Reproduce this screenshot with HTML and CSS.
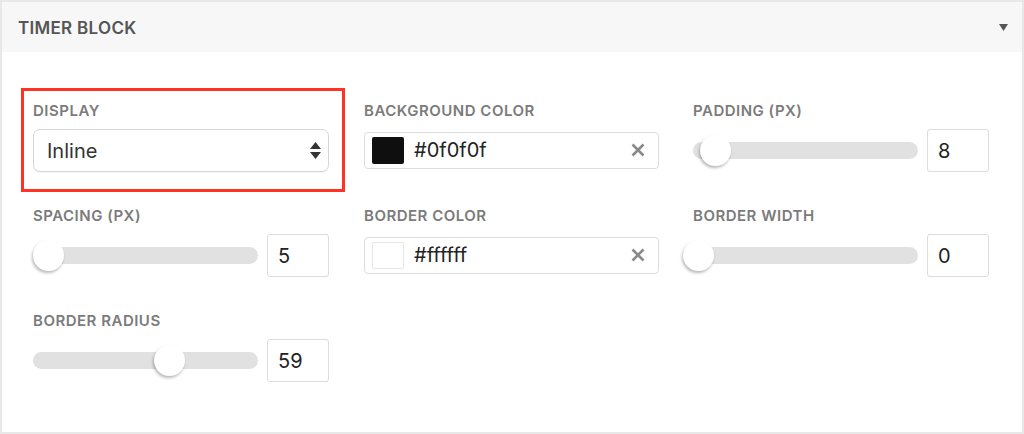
FILE: index.html
```html
<!DOCTYPE html>
<html>
<head>
<meta charset="utf-8">
<link rel="stylesheet" href="styles.css">
</head>
<body>
<div class="panel">
  <div class="panel-head">
    <span class="panel-title">TIMER BLOCK</span>
    <svg class="caret" width="9" height="7" viewBox="0 0 9 7"><path d="M0 0H9L4.5 7Z" fill="#555"/></svg>
  </div>
  <div class="panel-body">
    <div class="field highlight">
      <div class="label">DISPLAY</div>
      <div class="control">
        <div class="select">
          <span class="select-text">Inline</span>
          <svg class="updown" width="11" height="17" viewBox="0 0 11 17"><path d="M5.5 0L11 7H0Z M0 10H11L5.5 17Z" fill="#333"/></svg>
        </div>
      </div>
    </div>
    <div class="field">
      <div class="label">BACKGROUND COLOR</div>
      <div class="control">
        <div class="color-input">
          <span class="swatch swatch-dark"></span>
          <span class="color-text">#0f0f0f</span>
          <svg class="clear" width="14" height="14" viewBox="0 0 14 14"><path d="M1.5 1.5L12.5 12.5M12.5 1.5L1.5 12.5" stroke="#8a8a8a" stroke-width="2.6" stroke-linecap="butt"/></svg>
        </div>
      </div>
    </div>
    <div class="field">
      <div class="label">PADDING (PX)</div>
      <div class="control">
        <div class="slider"><span class="thumb" style="left: 7px"></span></div>
        <div class="num">8</div>
      </div>
    </div>

    <div class="field">
      <div class="label">SPACING (PX)</div>
      <div class="control">
        <div class="slider"><span class="thumb" style="left: 0px"></span></div>
        <div class="num">5</div>
      </div>
    </div>
    <div class="field">
      <div class="label">BORDER COLOR</div>
      <div class="control">
        <div class="color-input">
          <span class="swatch swatch-light"></span>
          <span class="color-text">#ffffff</span>
          <svg class="clear" width="14" height="14" viewBox="0 0 14 14"><path d="M1.5 1.5L12.5 12.5M12.5 1.5L1.5 12.5" stroke="#8a8a8a" stroke-width="2.6" stroke-linecap="butt"/></svg>
        </div>
      </div>
    </div>
    <div class="field">
      <div class="label">BORDER WIDTH</div>
      <div class="control">
        <div class="slider"><span class="thumb" style="left: -10px"></span></div>
        <div class="num">0</div>
      </div>
    </div>

    <div class="field">
      <div class="label">BORDER RADIUS</div>
      <div class="control">
        <div class="slider"><span class="thumb" style="left: 121px"></span></div>
        <div class="num">59</div>
      </div>
    </div>
  </div>
</div>
</body>
</html>
```

FILE: styles.css
```css
* { box-sizing: border-box; }
html, body { margin: 0; padding: 0; background: #fff; }
body {
  font-family: Inter, "Liberation Sans", sans-serif;
  width: 1024px;
  height: 434px;
  overflow: hidden;
}
.panel {
  width: 1024px;
  height: 434px;
  border: 2px solid #e8e8e8;
  background: #fff;
}
.panel-head {
  height: 50px;
  background: #f7f7f7;
  display: flex;
  align-items: center;
  justify-content: space-between;
  padding: 2px 14px 0 16px;
}
.panel-title {
  font-size: 17px;
  font-weight: 600;
  color: #555;
  letter-spacing: 0.3px;
}
.caret { margin-top: -2px; }
.panel-body {
  display: grid;
  grid-template-columns: 296px 294px 296px;
  column-gap: 35px;
  row-gap: 35px;
  padding: 50px 31px 0 31px;
}
.field { position: relative; }
.highlight::after {
  content: "";
  position: absolute;
  left: -12px;
  right: -16px;
  top: -14px;
  bottom: -20px;
  border: 3px solid #ff3224;
}
.label {
  font-size: 15px;
  line-height: 17px;
  font-weight: 600;
  color: #7b7b7b;
  letter-spacing: 0.5px;
  margin-bottom: 10px;
  white-space: nowrap;
}
.control {
  height: 43px;
  display: flex;
  align-items: center;
}
.select {
  width: 100%;
  height: 43px;
  border: 1px solid #d6d6d6;
  border-radius: 7px;
  display: flex;
  align-items: center;
  justify-content: space-between;
  padding: 0 7px 0 13px;
  box-shadow: 0 1px 1px rgba(0,0,0,0.05);
}
.select-text {
  font-size: 20px;
  color: #333;
}
.color-input {
  width: 295px;
  flex: none;
  height: 37px;
  border: 1px solid #dcdcdc;
  border-radius: 4px;
  display: flex;
  align-items: center;
  padding: 0 13px 0 7px;
  margin-top: -1px;
}
.swatch {
  width: 32px;
  height: 27px;
  border-radius: 2px;
  flex: none;
}
.swatch-dark { background: #0f0f0f; }
.swatch-light { background: #fff; border: 1px solid #e6e6e6; }
.color-text {
  font-size: 20px;
  color: #222;
  margin-left: 10px;
  flex: 1;
}
.clear { flex: none; }
.slider {
  position: relative;
  width: 225px;
  height: 17px;
  border-radius: 9px;
  background: #e1e1e1;
  flex: none;
}
.thumb {
  position: absolute;
  top: -7px;
  width: 31px;
  height: 31px;
  border-radius: 50%;
  background: #fff;
  box-shadow: -1px 2px 3px rgba(0,0,0,0.28);
}
.num {
  margin-left: 9px;
  width: 62px;
  height: 43px;
  border: 1px solid #dcdcdc;
  border-radius: 3px;
  font-size: 20px;
  color: #222;
  display: flex;
  align-items: center;
  padding-left: 10px;
}
```
